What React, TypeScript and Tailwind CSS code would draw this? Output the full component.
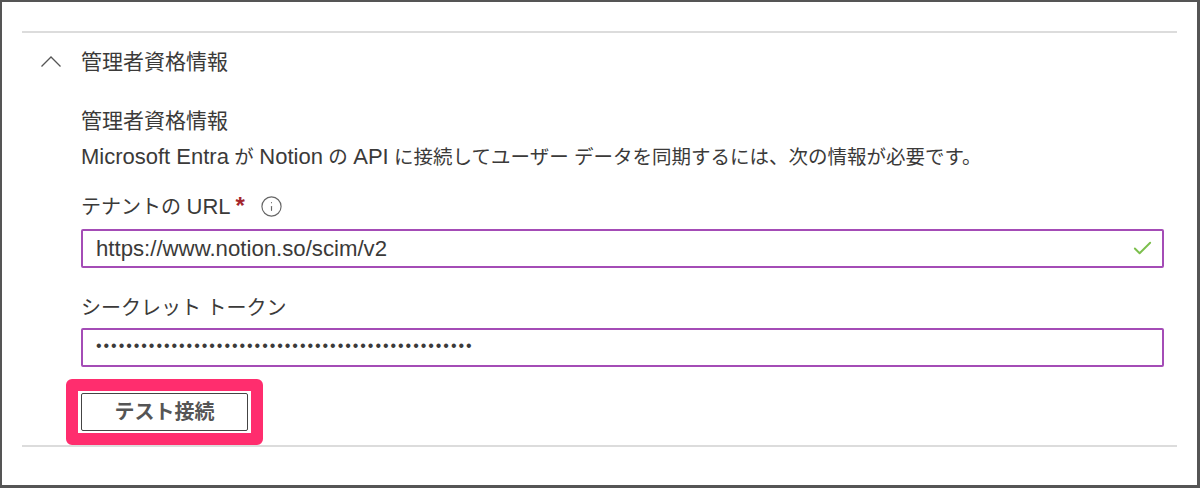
import { Check, Info } from 'lucide-react';

const font = { fontFamily: '"Liberation Sans", "Noto Sans CJK JP", sans-serif' };

// 英字だけ少し大きく見えるので span で分ける
function Latin({ children }: { children: string }) {
  return <span className="text-[22px]">{children}</span>;
}

export default function App() {
  return (
    <div
      style={font}
      className="w-[1200px] h-[488px] bg-white border-2 border-r-[3px] border-b-[3px] border-[#555555] text-[#3b3a39] overflow-hidden"
    >
      <div className="mx-[20px] mt-[29px] w-[1155px] border-t-2 border-b-2 border-[#dcdcdc] h-[416px]">
        {/* アコーディオン見出し */}
        <div className="flex items-center h-[57px]">
          <svg viewBox="0 0 20 11" className="w-[20px] h-[11px] ml-[19px] text-[#555555]" fill="none" stroke="currentColor" strokeWidth={1.3}>
            <path d="M0.5 10.5 L10 1 L19.5 10.5" />
          </svg>
          <span className="ml-[20px] text-[21px] leading-[28px]">管理者資格情報</span>
        </div>

        <div className="pl-[59px] w-[1142px]">
          <div className="mt-[17px] text-[21px] leading-[28px]">管理者資格情報</div>
          <div className="mt-[9px] h-[26px] text-[19.5px] leading-[26px] whitespace-nowrap">
            <Latin>Microsoft Entra</Latin> が <Latin>Notion</Latin> の <Latin>API</Latin> に接続してユーザー データを同期するには、次の情報が必要です。
          </div>

          <div className="mt-[23px] flex items-center h-[26px] text-[20px]">
            <span>
              テナントの <Latin>URL</Latin>
            </span>
            <span className="ml-[5px] text-[24px] leading-[26px] font-bold text-[#a4262c]">*</span>
            <Info className="ml-[15px] w-[23px] h-[23px] text-[#666666]" strokeWidth={1.2} />
          </div>
          <div className="mt-[10px] flex items-center justify-between h-[39px] border-2 border-[#a44cb6] rounded-[2px] pl-[13px] pr-[8px] text-[22.2px]">
            <span>https://www.notion.so/scim/v2</span>
            <Check className="w-[23px] h-[23px] text-[#7cbf4d]" strokeWidth={2} />
          </div>

          <div className="mt-[27px] h-[26px] flex items-center text-[20px]">シークレット トークン</div>
          <div className="mt-[7px] flex items-center h-[39px] border-2 border-[#a44cb6] rounded-[2px] pl-[13px] pb-[4px] text-[16px] tracking-[1.95px]">
            <span>{'•'.repeat(50)}</span>
          </div>

          {/* 強調枠付きボタン */}
          <div className="mt-[12px] -ml-[15px] w-[197px] h-[66px] border-[12px] border-[#ff2d6e] rounded-[6px] py-[2px] pl-[3px] pr-[3px]">
            <button className="block w-full h-full border-[1.5px] border-[#444444] rounded-[2px] bg-white text-[20px] font-semibold text-[#555555]">
              テスト接続
            </button>
          </div>
        </div>
      </div>
    </div>
  );
}
